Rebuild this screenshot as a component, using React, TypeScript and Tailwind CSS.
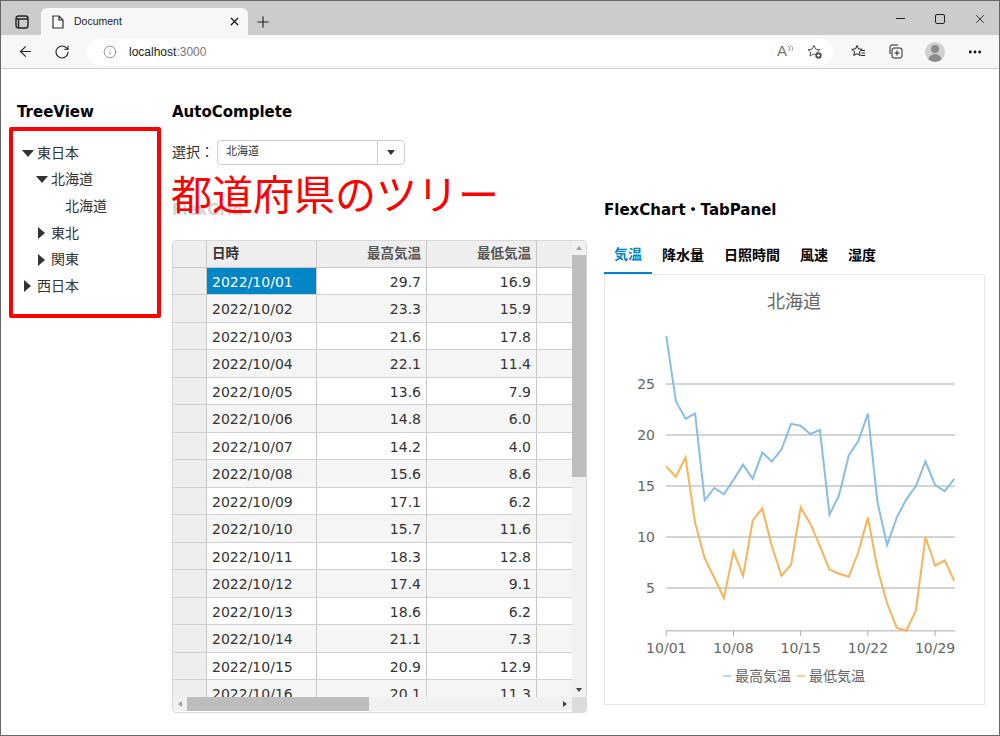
import { ArrowLeft, Info, MoreHorizontal, Plus, RotateCw, X } from "lucide-react";

const font = "font-['DejaVu_Sans','Noto_Sans_CJK_JP',sans-serif]";

const highs = [29.7, 23.3, 21.6, 22.1, 13.6, 14.8, 14.2, 15.6, 17.1, 15.7, 18.3, 17.4, 18.6, 21.1, 20.9, 20.1, 20.5, 12.2, 14.1, 18.0, 19.4, 22.1, 13.4, 9.2, 11.9, 13.7, 15.0, 17.4, 15.1, 14.5, 15.7];
const lows = [16.9, 15.9, 17.8, 11.4, 7.9, 6.0, 4.0, 8.6, 6.2, 11.6, 12.8, 9.1, 6.2, 7.3, 12.9, 11.3, 9.1, 6.8, 6.4, 6.1, 8.5, 11.9, 6.9, 3.5, 1.1, 0.8, 2.8, 10.0, 7.2, 7.7, 5.7];

const rows = highs.slice(0, 16).map((h, i) => ({
  date: `2022/10/${String(i + 1).padStart(2, "0")}`,
  high: h.toFixed(1),
  low: lows[i].toFixed(1),
}));

const xAt = (i: number) => 61.3 + i * 9.6;
const yAt = (v: number) => 364 - v * 10.2;
const line = (vals: number[]) => vals.map((v, i) => `${xAt(i).toFixed(1)},${yAt(v).toFixed(1)}`).join(" ");

const TreeItem = ({ label, depth, arrow }: { label: string; depth: number; arrow?: "down" | "right" }) => (
  <div className="flex h-[26.6px] items-center" style={{ paddingLeft: depth * 14 }}>
    <span className="flex w-[13px] justify-center">
      {arrow === "down" && <span className="h-0 w-0 border-x-[6px] border-t-[7px] border-x-transparent border-t-[#333]" />}
      {arrow === "right" && <span className="h-0 w-0 border-y-[6px] border-l-[7px] border-y-transparent border-l-[#333]" />}
    </span>
    <span className="ml-[3px] text-[14px] text-[#333]">{label}</span>
  </div>
);

const Grid = () => (
  <div className="relative h-[473px] w-[415px] overflow-hidden rounded border border-[#d8d8d8] bg-white text-[14px] text-[#333]">
    <div className="flex h-[27px] border-b border-[#c8c8c8] bg-[#eeeeee] text-[13.5px] font-bold">
      <div className="w-[34px] border-r border-[#c8c8c8]" />
      <div className="w-[110px] border-r border-[#c8c8c8] px-[5px] leading-[25px]">日時</div>
      <div className="w-[110px] border-r border-[#c8c8c8] px-[5px] text-right leading-[25px] text-[#555]">最高気温</div>
      <div className="w-[110px] border-r border-[#c8c8c8] px-[5px] text-right leading-[25px] text-[#555]">最低気温</div>
      <div className="flex-1" />
    </div>
    {rows.map((r, i) => (
      <div key={r.date} className={`flex h-[27.47px] border-b border-[#d0d0d0] ${i % 2 ? "bg-[#f5f5f5]" : "bg-white"}`}>
        <div className="w-[34px] border-r border-[#c8c8c8] bg-[#eeeeee]" />
        <div className={`w-[110px] border-r border-[#c8c8c8] px-[5px] leading-[28px] ${i === 0 ? "bg-[#0085c7] text-white" : ""}`}>{r.date}</div>
        <div className="w-[110px] border-r border-[#c8c8c8] px-[5px] text-right leading-[28px]">{r.high}</div>
        <div className="w-[110px] border-r border-[#c8c8c8] px-[5px] text-right leading-[28px]">{r.low}</div>
        <div className="flex-1" />
      </div>
    ))}
    {/* scrollbars */}
    <div className="absolute top-0 right-0 bottom-[15px] flex w-[14px] flex-col items-center bg-[#f1f1f1]">
      <span className="mt-[5px] h-0 w-0 border-x-[3px] border-b-[4px] border-x-transparent border-b-[#a0a0a0]" />
      <div className="mt-[5px] h-[222px] w-full bg-[#bdbdbd]" />
      <span className="mt-auto mb-[5px] h-0 w-0 border-x-[3px] border-t-[4px] border-x-transparent border-t-[#444]" />
    </div>
    <div className="absolute right-[14px] bottom-[1px] left-0 flex h-[14px] items-center bg-[#f1f1f1]">
      <span className="ml-[5px] h-0 w-0 border-y-[3px] border-r-[4px] border-y-transparent border-r-[#a0a0a0]" />
      <div className="ml-[5px] h-full w-[182px] bg-[#bdbdbd]" />
      <span className="mr-[5px] ml-auto h-0 w-0 border-y-[3px] border-l-[4px] border-y-transparent border-l-[#444]" />
    </div>
    <div className="absolute right-0 bottom-0 h-[15px] w-[14px] bg-[#dcdcdc]" />
  </div>
);

const Chart = () => (
  <div className="h-[431px] w-[381px] border border-[#e8e8e8] bg-white">
    <svg width="379" height="429" viewBox="0 0 379 429" className="block">
      <text x="189" y="33" textAnchor="middle" fontSize="18" fill="#666" fontFamily="'Noto Sans CJK JP',sans-serif">北海道</text>
      {[25, 20, 15, 10, 5].map((v) => (
        <g key={v}>
          <line x1="61" x2="350" y1={yAt(v)} y2={yAt(v)} stroke="#aaa" strokeWidth="1.2" />
          <text x="50" y={yAt(v) + 5} textAnchor="end" fontSize="14" fill="#666" fontFamily="'DejaVu Sans',sans-serif">{v}</text>
        </g>
      ))}
      <line x1="61" x2="350" y1={yAt(0.8)} y2={yAt(0.8)} stroke="#c8c8c8" strokeWidth="1.5" />
      {["10/01", "10/08", "10/15", "10/22", "10/29"].map((d, i) => (
        <g key={d}>
          <line x1={xAt(i * 7)} x2={xAt(i * 7)} y1={yAt(0.8)} y2={yAt(0.8) + 5} stroke="#aaa" />
          <text x={xAt(i * 7)} y={yAt(0.8) + 22} textAnchor="middle" fontSize="14" fill="#666" fontFamily="'DejaVu Sans',sans-serif">{d}</text>
        </g>
      ))}
      <polyline points={line(highs)} fill="none" stroke="#88bde6" strokeWidth="2" />
      <polyline points={line(lows)} fill="none" stroke="#fbb258" strokeWidth="2" />
      <line x1="118" x2="126" y1="401" y2="401" stroke="#88bde6" strokeWidth="1.2" />
      <text x="130" y="406" fontSize="14" fill="#666" fontFamily="'Noto Sans CJK JP',sans-serif">最高気温</text>
      <line x1="192" x2="200" y1="401" y2="401" stroke="#fbb258" strokeWidth="1.2" />
      <text x="204" y="406" fontSize="14" fill="#666" fontFamily="'Noto Sans CJK JP',sans-serif">最低気温</text>
    </svg>
  </div>
);

const BrowserChrome = () => (
  <div className="font-['Liberation_Sans',sans-serif]">
    <div className="flex h-[34px] items-end bg-[#cccccc]">
      <div className="flex h-[27px] w-[40px] items-center justify-center pl-[1px]">
        <svg width="14" height="14" viewBox="0 0 14 14" fill="none" stroke="#222" strokeWidth="1.4">
          <rect x="1" y="1" width="12" height="12" rx="2.5" />
          <path d="M1 4h12M3.500 4v9" />
        </svg>
      </div>
      <div className="flex h-[27px] w-[207px] items-center rounded-t-md bg-[#f7f7f7] pl-[11px]">
        <svg width="12" height="14" viewBox="0 0 12 14" fill="none" stroke="#333" strokeWidth="1.2">
          <path d="M1 1h6l4 4v8H1zM7 1v4h4" />
        </svg>
        <span className="ml-[10px] text-[10.5px] text-[#222]">Document</span>
        <X className="mr-[7px] ml-auto h-[13px] w-[13px] text-[#111]" strokeWidth={2.2} />
      </div>
      <Plus className="mb-[4px] ml-[6px] h-[18px] w-[18px] text-[#222]" strokeWidth={1.5} />
      <div className="ml-auto flex h-[33px] items-center self-start pt-[2px] text-[#222]">
        <span className="h-[1px] w-[9px] bg-[#222]" />
        <span className="ml-[30px] h-[10px] w-[10px] rounded-[2px] border border-[#222]" />
        <X className="mr-[12px] ml-[28px] h-[14px] w-[14px]" strokeWidth={1.5} />
      </div>
    </div>
    <div className="flex h-[34px] items-center border-b border-[#d0d0d0] bg-[#f7f7f7]">
      <ArrowLeft className="ml-[16px] h-[17px] w-[17px] text-[#222]" strokeWidth={1.5} />
      <RotateCw className="ml-[20px] h-[16px] w-[16px] text-[#222]" strokeWidth={1.6} />
      <div className="ml-[17px] flex h-[26px] w-[746px] items-center rounded-full bg-white pl-[16px]">
        <Info className="h-[14px] w-[14px] text-[#777]" strokeWidth={1.3} />
        <span className="ml-[12px] text-[12px] text-[#222]">localhost<span className="text-[#777]">:3000</span></span>
        <span className="ml-auto text-[15px] text-[#777]">A</span>
        <svg width="6" height="8" viewBox="0 0 6 8" fill="none" stroke="#888" className="mb-[6px]"><path d="M1 1c2 1 2 3 1 5M3 0c3 2 3 4 2 6" /></svg>
        <svg width="16" height="16" viewBox="0 0 16 16" fill="none" stroke="#555" className="mr-[10px] ml-[14px]">
          <path d="M7 1.500l1.800 3.700 4 .6-2.900 2.800.4 2-1.800-.2-2-.3-3.600 1.900.7-4L1 5.800l4.100-.6z" />
          <circle cx="11.500" cy="11.500" r="3.200" fill="#555" stroke="none" />
          <path d="M10 11.500h3M11.500 10v3" stroke="#fff" />
        </svg>
      </div>
      <svg width="15" height="15" viewBox="0 0 15 15" fill="none" stroke="#222" className="ml-[18px]">
        <path d="M6 1.500l1.500 3.400 3.700.4-2.800 2.500.8 3.700L6 9.700l-3.200 1.800.8-3.700L.8 5.300l3.700-.4zM10 6.500h4M10.500 9h3.500M10 11.500h4" />
      </svg>
      <svg width="15" height="15" viewBox="0 0 15 15" fill="none" stroke="#222" className="ml-[22px]">
        <rect x="4" y="4" width="10" height="10" rx="2" />
        <path d="M9 6.500v5M6.500 9h5M2 10V3a2 2 0 0 1 2-2h6" />
      </svg>
      <div className="ml-[22px] flex h-[20px] w-[20px] flex-col items-center overflow-hidden rounded-full bg-[#d0d0d0]">
        <span className="mt-[3px] h-[8px] w-[8px] rounded-full bg-[#8a8a8a]" />
        <span className="mt-[1px] h-[8px] w-[14px] rounded-t-full bg-[#8a8a8a]" />
      </div>
      <MoreHorizontal className="ml-[22px] h-[16px] w-[16px] text-[#111]" strokeWidth={2.2} />
    </div>
  </div>
);

export default function App() {
  return (
    <div className={`relative h-[736px] w-[1000px] overflow-hidden border border-[#666] bg-white ${font}`}>
      <BrowserChrome />
      <div className="flex pt-[32px]">
        <div className="w-[171px] pl-[8px]">
          <h2 className="pl-[8px] text-[15px] leading-[22px] font-bold text-black">TreeView</h2>
          <div className="mt-[4px] h-[191px] w-[152px] rounded-[2px] border-[4px] border-[#ff0000] pt-[9px] pl-[8px]">
            <TreeItem label="東日本" depth={0} arrow="down" />
            <TreeItem label="北海道" depth={1} arrow="down" />
            <TreeItem label="北海道" depth={2} />
            <TreeItem label="東北" depth={1} arrow="right" />
            <TreeItem label="関東" depth={1} arrow="right" />
            <TreeItem label="西日本" depth={0} arrow="right" />
          </div>
        </div>
        <div className="w-[432px]">
          <h2 className="text-[15px] leading-[22px] font-bold text-black">AutoComplete</h2>
          <div className="mt-[17px] flex items-center">
            <span className="text-[14px] text-[#333]">選択：</span>
            <div className="ml-[3px] flex h-[25px] w-[188px] items-center rounded border border-[#ccc] text-[11px] text-[#333]">
              <span className="flex-1 pl-[8px]">北海道</span>
              <div className="flex h-full w-[27px] items-center justify-center border-l border-[#ccc]">
                <span className="h-0 w-0 border-x-[4.5px] border-t-[5px] border-x-transparent border-t-[#333]" />
              </div>
            </div>
          </div>
          <h2 className="mt-[34px] text-[15px] leading-[22px] font-bold text-[#d4d4d4]">FlexGrid</h2>
          <div className="mt-[19px]"><Grid /></div>
        </div>
        <div className="pt-[98px]">
          <h2 className="text-[15px] leading-[22px] font-bold text-black">FlexChart・TabPanel</h2>
          <div className="mt-[16px] flex h-[37px] text-[14px] font-bold text-black">
            <div className="flex w-[48px] items-center justify-center border-b-[2px] border-[#0085c7] text-[#0085c7]">気温</div>
            <div className="flex w-[62px] items-center justify-center">降水量</div>
            <div className="flex w-[76px] items-center justify-center">日照時間</div>
            <div className="flex w-[48px] items-center justify-center">風速</div>
            <div className="flex w-[48px] items-center justify-center">湿度</div>
          </div>
          <Chart />
        </div>
      </div>
      {/* red annotation over the page */}
      <div className="absolute top-[166px] left-[170px] font-['Noto_Sans_CJK_JP',sans-serif] text-[41px] leading-[50px] whitespace-nowrap text-[#ff0000]">都道府県のツリー</div>
    </div>
  );
}
